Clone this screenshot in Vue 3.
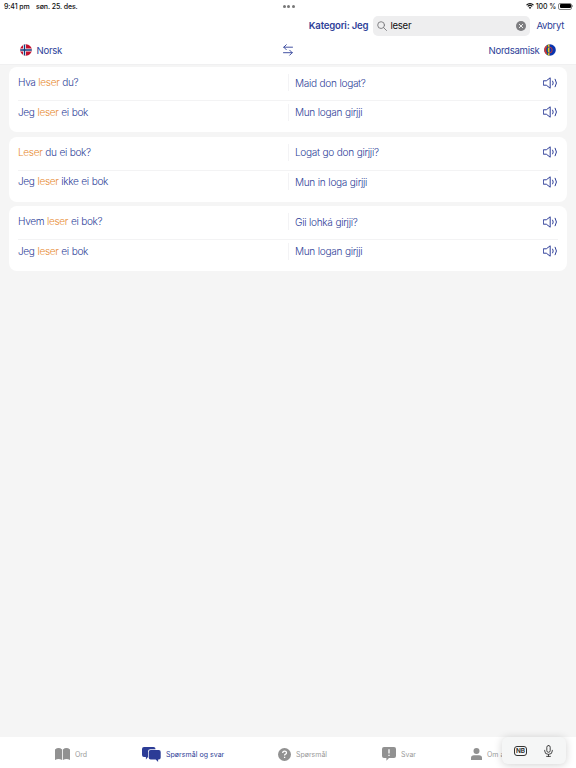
<template>
  <div class="app">
    <!-- Statuslinje -->
    <div class="status-bar">
      <div class="status-left">
        <span class="clock">9:41 pm</span>
        <span class="date">søn. 25. des.</span>
      </div>
      <div class="dots"><i></i><i></i><i></i></div>
      <div class="status-right">
        <svg class="wifi" viewBox="0 0 16 12">
          <path d="M1 4.2a10 10 0 0 1 14 0M3.5 6.9a6.4 6.4 0 0 1 9 0" fill="none" stroke="#111" stroke-width="2.2" />
          <path d="M8 12 5.4 9.2a3.8 3.8 0 0 1 5.2 0z" fill="#111" />
        </svg>
        <span class="percent">100 %</span>
        <span class="battery"><b></b></span>
        <span class="battery-cap"></span>
      </div>
    </div>

    <!-- Søk -->
    <header class="search-row">
      <span class="category">Kategori: Jeg</span>
      <div class="search-box">
        <svg class="search-icon" viewBox="0 0 10 10">
          <circle cx="4.1" cy="4.1" r="3.4" />
          <path d="M6.6 6.6 9.5 9.5" />
        </svg>
        <span class="search-text">{{ query }}</span>
        <button class="clear" @click="query = ''">
          <svg viewBox="0 0 10 10">
            <circle cx="5" cy="5" r="5" fill="#7d7d80" />
            <path d="M3.3 3.3 6.7 6.7M6.7 3.3 3.3 6.7" stroke="#eee" stroke-width="1" stroke-linecap="round" />
          </svg>
        </button>
      </div>
      <button class="cancel">Avbryt</button>
    </header>

    <!-- Språk -->
    <div class="languages">
      <div class="language">
        <svg class="flag" viewBox="0 0 12 12">
          <clipPath id="flag-no"><circle cx="6" cy="6" r="5.8" /></clipPath>
          <g clip-path="url(#flag-no)">
            <rect width="12" height="12" fill="#c4122f" />
            <path d="M4.5 0V12M0 6H12" stroke="#fff" stroke-width="3" />
            <path d="M4.5 0V12M0 6H12" stroke="#123a7a" stroke-width="1.4" />
          </g>
        </svg>
        <span>Norsk</span>
      </div>
      <svg class="swap" viewBox="0 0 10 12">
        <path d="M9.5 3.2H.8M3.3.7.8 3.2l2.5 2.5M.5 8.7h8.7M6.7 6.2l2.5 2.5-2.5 2.5" />
      </svg>
      <div class="language right">
        <span>Nordsamisk</span>
        <svg class="flag" viewBox="0 0 12 12">
          <clipPath id="flag-se"><circle cx="6" cy="6" r="5.8" /></clipPath>
          <g clip-path="url(#flag-se)">
            <rect width="12" height="12" fill="#0a35b0" />
            <rect width="3.4" height="12" fill="#d83a2e" />
            <rect x="3.2" width="1" height="12" fill="#16804a" />
            <rect x="4" width="1.5" height="12" fill="#f5c51c" />
            <path d="M5.2 3a3 3 0 0 0 0 6" fill="none" stroke="#0a35b0" stroke-width=".8" />
            <path d="M5.2 3a3 3 0 0 1 0 6" fill="none" stroke="#d83a2e" stroke-width=".9" />
          </g>
        </svg>
      </div>
    </div>

    <!-- Treff -->
    <main class="results">
      <section v-for="(card, c) in cards" :key="c" class="card">
        <div v-for="(row, r) in card" :key="r" class="row">
          <div class="cell source">
            <span class="phrase">{{ row.before }}<em>{{ row.hit }}</em>{{ row.after }}</span>
          </div>
          <div class="cell target">
            <span class="phrase">{{ row.sami }}</span>
          </div>
          <svg class="speaker" viewBox="0 0 15 12">
            <path d="M.7 3.8h2.6L7.2.8v10.4l-3.9-3H.7z" />
            <path d="M9.7 4.1q1.2 1.9 0 3.8M12.2 2.2q2.7 3.8 0 7.6" />
          </svg>
        </div>
      </section>
    </main>

    <!-- Faner -->
    <nav class="tabs">
      <div class="tab">
        <svg width="15" height="12" viewBox="0 0 15 12">
          <path d="M0 1.4Q3.6-1.2 7.1 1.4V12Q3.5 9.8 0 12zM7.9 1.4Q11.4-1.2 15 1.4V12Q11.5 9.8 7.9 12z" />
        </svg>
        <span>Ord</span>
      </div>
      <div class="tab active">
        <svg width="19" height="15" viewBox="0 0 19 15">
          <path d="M2 0h9.5a2 2 0 0 1 2 2v.2H8.4a2.4 2.4 0 0 0-2.4 2.4V10l-2.1 2.5V9.9H2a2 2 0 0 1-2-2V2a2 2 0 0 1 2-2z" />
          <path d="M8.7 3h8a2 2 0 0 1 2 2v5.6a2 2 0 0 1-2 2h-.6V15l-2.4-2.4h-5a2 2 0 0 1-2-2V5a2 2 0 0 1 2-2z" />
        </svg>
        <span>Spørsmål og svar</span>
      </div>
      <div class="tab">
        <svg width="13" height="13" viewBox="0 0 13 13">
          <circle cx="6.5" cy="6.5" r="6.5" />
          <path class="mark" d="M4.7 5q0-1.8 1.9-1.8T8.5 4.8q0 .9-1 1.4-.9.4-.9 1.3M6.6 8.8v1.2" />
        </svg>
        <span>Spørsmål</span>
      </div>
      <div class="tab">
        <svg width="14" height="14" viewBox="0 0 14 14">
          <path d="M2 0h10a2 2 0 0 1 2 2v7a2 2 0 0 1-2 2H7l-2.6 2.7V11H2a2 2 0 0 1-2-2V2a2 2 0 0 1 2-2z" />
          <path class="mark" d="M7 2.2v4.3M7 7.8v1.3" />
        </svg>
        <span>Svar</span>
      </div>
      <div class="tab">
        <svg width="11" height="12" viewBox="0 0 11 12">
          <circle cx="5.5" cy="3" r="3" />
          <path d="M0 12V9.8Q0 7.2 3 7.2h5q3 0 3 2.6V12z" />
        </svg>
        <span>Om a</span>
      </div>
    </nav>

    <!-- Flytende tastaturlinje -->
    <div class="keyboard">
      <span class="nb">NB</span>
      <svg class="mic" viewBox="0 0 9 12">
        <rect x="2.8" y=".5" width="3.4" height="6.8" rx="1.7" />
        <path d="M.7 5.3v.6a3.8 3.5 0 0 0 7.6 0v-.6M4.5 9.4v2M2.6 11.4h3.8" />
      </svg>
    </div>
  </div>
</template>

<script setup>
import { ref } from 'vue'

const query = ref('leser')

// Spørsmål og svar, norsk til venstre og nordsamisk til høyre
const cards = [
  [
    { before: 'Hva ', hit: 'leser', after: ' du?', sami: 'Maid don logat?' },
    { before: 'Jeg ', hit: 'leser', after: ' ei bok', sami: 'Mun logan girjji' }
  ],
  [
    { before: '', hit: 'Leser', after: ' du ei bok?', sami: 'Logat go don girjji?' },
    { before: 'Jeg ', hit: 'leser', after: ' ikke ei bok', sami: 'Mun in loga girjji' }
  ],
  [
    { before: 'Hvem ', hit: 'leser', after: ' ei bok?', sami: 'Gii lohká girjji?' },
    { before: 'Jeg ', hit: 'leser', after: ' ei bok', sami: 'Mun logan girjji' }
  ]
]
</script>

<style>
body {
  margin: 0;
  background: #f5f5f5;
}
</style>

<style scoped>
.app {
  position: relative;
  display: flex;
  flex-direction: column;
  width: 576px;
  height: 768px;
  overflow: hidden;
  background: #f5f5f5;
  color: #2f3f99;
  font-family: Inter, "Liberation Sans", sans-serif;
  white-space: nowrap;
}

svg {
  display: block;
  flex-shrink: 0;
}

button {
  padding: 0;
  border: 0;
  background: none;
  color: inherit;
  font-family: inherit;
}

.status-bar {
  display: grid;
  grid-template-columns: 1fr auto 1fr;
  align-items: center;
  height: 12px;
  padding: 0 3px 0 4px;
  background: #fff;
  color: #111;
  font-size: 7px;
  font-weight: 500;
}

.status-left,
.status-right {
  display: flex;
  align-items: center;
}

.status-left {
  gap: 6.5px;
  letter-spacing: -0.1px;
}

.date {
  letter-spacing: -0.1px;
}

.status-right {
  justify-content: flex-end;
}

.percent {
  letter-spacing: -0.1px;
}

.dots {
  display: flex;
  gap: 1.5px;
}

.dots i {
  width: 3px;
  height: 3px;
  border-radius: 50%;
  background: #777;
}

.wifi {
  width: 8px;
  height: 6px;
  margin-right: 2px;
}

.battery {
  display: flex;
  width: 11px;
  height: 4px;
  margin-left: 2px;
  padding: 0.5px;
  border: 0.5px solid #888;
  border-radius: 2px;
}

.battery b {
  flex: 1;
  border-radius: 1px;
  background: #000;
}

.battery-cap {
  width: 1px;
  height: 2px;
  background: #aaa;
}

.search-row {
  display: flex;
  align-items: center;
  justify-content: flex-end;
  height: 27px;
  padding-right: 12px;
  background: #fff;
}

.category {
  margin-right: 5px;
  font-size: 9.6px;
  font-weight: 600;
  letter-spacing: -0.2px;
}

.search-box {
  display: flex;
  align-items: center;
  width: 149px;
  height: 20px;
  padding: 0 4px;
  border-radius: 5px;
  background: #eeeeef;
}

.search-icon {
  width: 10px;
  height: 10px;
  fill: none;
  stroke: #77777a;
  stroke-width: 0.9;
  stroke-linecap: round;
}

.search-text {
  flex: 1;
  margin-left: 3px;
  color: #111;
  font-size: 9.6px;
  letter-spacing: -0.25px;
}

.clear svg {
  width: 10px;
  height: 10px;
}

.cancel {
  margin-left: 6px;
  font-size: 9.6px;
  letter-spacing: -0.35px;
}

.languages {
  display: grid;
  grid-template-columns: 1fr 10px 1fr;
  align-items: center;
  height: 22px;
  padding: 0 20px 3px;
  border-bottom: 1px solid #f0f0f1;
  background: #fff;
  font-size: 9.6px;
  letter-spacing: -0.28px;
}

.language {
  display: flex;
  align-items: center;
  gap: 4.5px;
}

.right {
  justify-content: flex-end;
}

.flag {
  width: 12px;
  height: 12px;
}

.swap {
  width: 10px;
  height: 12px;
  fill: none;
  stroke: #2f3f99;
  stroke-width: 0.9;
  stroke-linecap: round;
  stroke-linejoin: round;
}

.results {
  display: flex;
  flex: 1;
  flex-direction: column;
  gap: 4.6px;
  padding: 2px 9.5px 0 9px;
}

.card {
  height: 65px;
  padding: 0 8.5px 0 9px;
  box-sizing: border-box;
  border-radius: 8px;
  background: #fff;
}

.row {
  display: flex;
  align-items: center;
  box-sizing: border-box;
  height: 34px;
  padding-bottom: 1.6px;
  border-bottom: 1px solid #f3f3f4;
}

.row:last-child {
  height: 24px;
  border-bottom: 0;
}

.cell {
  display: flex;
  align-items: center;
  height: 17px;
  font-size: 10.1px;
  font-weight: 300;
}

.source {
  width: 270px;
  padding-bottom: 1px;
  box-sizing: border-box;
}

.target {
  flex: 1;
  padding-left: 6px;
  border-left: 1px solid #f3f3f5;
}

.phrase {
  letter-spacing: -0.34px;
  word-spacing: 0.4px;
}

.source .phrase {
  letter-spacing: -0.37px;
}

.phrase em {
  color: #e88d35;
  font-style: normal;
}

.speaker {
  width: 15px;
  height: 12px;
  fill: none;
  stroke: #2f3f99;
  stroke-width: 1;
  stroke-linejoin: round;
  stroke-linecap: round;
}

.tabs {
  display: grid;
  grid-template-columns: 87px 136px 104px 89px auto;
  align-items: center;
  height: 31px;
  padding: 3px 0 0 55px;
  box-sizing: border-box;
  background: #fff;
  color: #999;
  font-size: 7px;
}

.tab {
  display: flex;
  align-items: center;
  gap: 5px;
}

.tab svg {
  fill: #919191;
}

.tab .mark {
  fill: none;
  stroke: #fff;
  stroke-width: 1.3;
}

.active {
  color: #2c3c96;
  letter-spacing: 0.04px;
}

.active svg {
  fill: #2c3c96;
}

.keyboard {
  position: absolute;
  right: 10px;
  bottom: 4px;
  display: flex;
  align-items: center;
  justify-content: space-between;
  width: 64px;
  height: 27px;
  padding: 0 12px;
  box-sizing: border-box;
  border-radius: 6px;
  background: #f5f6f6;
  box-shadow: 0 1px 9px rgba(0, 0, 0, 0.18);
}

.nb {
  width: 11px;
  height: 8px;
  border: 1px solid #333;
  border-radius: 3px;
  color: #222;
  font-size: 6.4px;
  font-weight: 600;
  line-height: 8px;
  text-align: center;
}

.mic {
  width: 9px;
  height: 12px;
  margin-right: 1px;
  fill: none;
  stroke: #333;
  stroke-width: 0.9;
  stroke-linecap: round;
}
</style>
